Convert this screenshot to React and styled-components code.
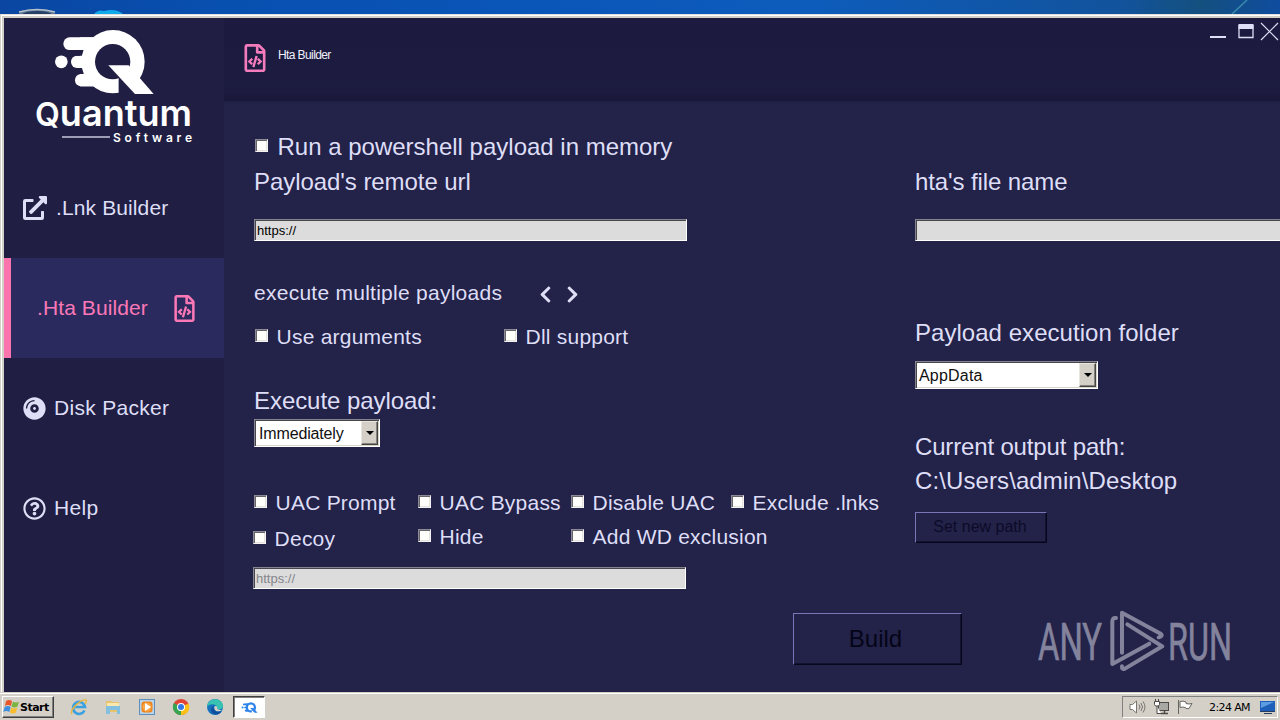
import React from "react";
import styled, { createGlobalStyle } from "styled-components";
import {
  FaRegFileCode,
  FaExternalLinkAlt,
  FaCompactDisc,
  FaRegQuestionCircle,
  FaChevronLeft,
  FaChevronRight,
} from "react-icons/fa";

const GlobalStyle = createGlobalStyle`
  * { box-sizing: border-box; }
  body { margin: 0; overflow: hidden; font-family: "Liberation Sans", Arial, sans-serif; }
  svg { display: block; flex: none; }
`;

const Desktop = styled.div`
  width: 1280px;
  height: 720px;
  overflow: hidden;
  display: flex;
  flex-direction: column;
`;

const Wallpaper = styled.div`
  height: 14px;
  flex: none;
  background: linear-gradient(90deg, #0a46a2 0, #0850b0 230px, #0a55b8 520px, #0d5cbc 800px, #12539c 1120px, #14507f 1200px, #0f4c9e 1280px);
`;

const WindowFrame = styled.div`
  height: 678px;
  flex: none;
  display: flex;
  padding: 2px 0 0 2px;
  background: #d4d0c8;
  border-top: 1px solid #e4e1da;
  border-left: 1px solid #d4d0c8;
  box-shadow: inset 1px 1px 0 #fff;
`;

const Window = styled.div`
  flex: 1;
  min-width: 0;
  display: flex;
  margin: 1px 0 0 1px;
  background: #232249;
  overflow: hidden;
  color: #dedef6;
`;

const Sidebar = styled.nav`
  width: 220px;
  flex: none;
  background: #201f43;
`;

const LogoArea = styled.div`
  height: 140px;
`;

const NavItem = styled.div`
  height: 100px;
  display: flex;
  align-items: center;
  padding-left: ${(p) => (p.$active ? 26 : 19)}px;
  gap: ${(p) => p.$gap || 8}px;
  font-size: 21px;
  line-height: 24px;
  letter-spacing: ${(p) => (p.$spacing === undefined ? 0.3 : p.$spacing)}px;
  background: ${(p) => (p.$active ? "#2b2a5e" : "transparent")};
  color: ${(p) => (p.$active ? "#fb78b6" : "#dedef6")};
  border-left: ${(p) => (p.$active ? "7px solid #fb74ad" : "0")};
`;

const Main = styled.main`
  flex: 1;
  min-width: 0;
`;

const TitleBar = styled.header`
  height: 84px;
  display: flex;
  padding: 4px 1px 0 21px;
  background: linear-gradient(#1c1b3f 0, #1c1b40 74px, #19183a 82px, #201f44 84px);
`;

const TitleIcon = styled.div`
  margin-top: 22px;
  width: 20px;
  color: #f57cbc;
  display: flex;
  justify-content: center;
`;

const Title = styled.div`
  margin: 26px 0 0 13px;
  flex: 1;
  font-size: 12px;
  line-height: 14px;
  letter-spacing: -0.6px;
  color: #f0f0fa;
`;

const Body = styled.div`
  display: grid;
  grid-template-columns: 662px 1fr;
  padding-left: 29px;
  height: 487px;
`;

const Column = styled.section`
  display: flex;
  flex-direction: column;
  align-items: flex-start;
  padding-top: ${(p) => p.$top}px;
`;

const Line = styled.div`
  display: flex;
  flex: none;
  margin-top: ${(p) => p.$mt || 0}px;
  margin-left: ${(p) => p.$ml || 0}px;
  height: ${(p) => (p.$small ? 24 : 28)}px;
  font-size: ${(p) => (p.$small ? 21 : 24)}px;
  line-height: ${(p) => (p.$small ? 24 : 28)}px;
  letter-spacing: ${(p) => (p.$spacing === undefined ? (p.$small ? 0.22 : 0) : p.$spacing)}px;
  white-space: nowrap;
`;

const OptionGrid = styled(Line)`
  display: grid;
  grid-template-columns: ${(p) => p.$cols};
`;

const Arrows = styled.div`
  display: flex;
  gap: 8px;
  margin: 4px 0 0 34px;
`;

const Option = styled.label`
  display: flex;
  gap: ${(p) => (p.$large ? 9.5 : 8.6)}px;
  margin-top: ${(p) => p.$drop || 0}px;
  margin-left: ${(p) => (p.$drop ? -1 : 0)}px;
`;

const Box = styled.span`
  width: 13px;
  height: 13px;
  flex: none;
  margin-top: ${(p) => (p.$large ? 6 : 4)}px;
  background: #fffffb;
  border: 1px solid;
  border-color: #8c8a94 #f4f2f4 #f4f2f4 #8c8a94;
  box-shadow: inset 1px 1px 0 #66646a, inset -1px -1px 0 #e6e3de;
`;

const Field = styled.div`
  width: ${(p) => p.$w || 433}px;
  height: 22px;
  flex: none;
  margin-top: ${(p) => p.$mt}px;
  margin-left: ${(p) => p.$ml || 0}px;
  padding: 1px 2px;
  font-size: 13px;
  line-height: 20px;
  background: #dcdcdc;
  color: ${(p) => (p.$muted ? "#85858b" : "#000")};
  border: 1px solid;
  border-color: #85838c #fff #fff #85838c;
  box-shadow: inset 1px 1px 0 #47464f;
`;

const SelectBox = styled.div`
  width: ${(p) => p.$w}px;
  height: 28px;
  flex: none;
  display: flex;
  justify-content: space-between;
  margin-top: ${(p) => p.$mt}px;
  margin-left: ${(p) => p.$ml || 0}px;
  padding: 1px 0 1px ${(p) => p.$pad || 3}px;
  background: #fff;
  color: #111;
  border: 1px solid;
  border-color: #85838c #fff #fff #85838c;
  box-shadow: inset 1px 1px 0 #47464f, inset -1px -1px 0 #d8d5cf;
  font-size: 16px;
  line-height: 25px;
  letter-spacing: ${(p) => p.$spacing || 0}px;
`;

const DropButton = styled.span`
  width: 17px;
  height: 24px;
  margin-right: 1px;
  display: flex;
  align-items: center;
  justify-content: center;
  background: #d4d0c8;
  border: 1px solid;
  border-color: #e8e5df #45443f #45443f #e8e5df;
  box-shadow: inset -1px -1px 0 #84827c;
`;

const FlatButton = styled.button`
  font-family: inherit;
  width: ${(p) => p.$w}px;
  height: ${(p) => p.$h}px;
  flex: none;
  padding: ${(p) => p.$padding || 0};
  margin: ${(p) => p.$margin || 0};
  font-size: ${(p) => p.$size}px;
  line-height: 1.15;
  color: ${(p) => p.$ink};
  background: #232249;
  border: 1px solid;
  border-color: #7976b8 #07071c #07071c #7976b8;
  box-shadow: inset -1px -1px 0 #131230;
`;

const Footer = styled.footer`
  display: flex;
  padding: 18px 0 0 569px;
`;

const Watermark = styled.div`
  margin: 1px 0 0 72px;

  svg { overflow: visible; }
`;

const Taskbar = styled.div`
  height: 28px;
  flex: none;
  display: flex;
  align-items: flex-start;
  background: #d4d0c8;
  border-top: 1px solid #d4d0c8;
  box-shadow: inset 0 1px 0 #fff;
  padding: 3px 0 0 2px;
`;

const StartButton = styled.div`
  width: 52px;
  height: 22px;
  display: flex;
  align-items: center;
  font: bold 11px "DejaVu Sans", sans-serif;
  letter-spacing: -0.5px;
  color: #000;
  border: 1px solid;
  border-color: #fff #404040 #404040 #fff;
  box-shadow: inset -1px -1px 0 #808080;
`;

const QuickLaunch = styled.div`
  display: flex;
  gap: 16px;
  margin: 2px 0 0 16px;
`;

const ActiveTask = styled.div`
  width: 32px;
  height: 22px;
  margin-left: 9px;
  display: flex;
  align-items: center;
  justify-content: center;
  background: #fff;
  border: 1px solid;
  border-color: #404040 #fff #fff #404040;
  box-shadow: inset 1px 1px 0 #808080;
`;

const Tray = styled.div`
  width: 156px;
  height: 22px;
  margin: 0 2px 0 auto;
  display: flex;
  align-items: center;
  padding-left: 6px;
  border: 1px solid;
  border-color: #808080 #fff #fff #808080;
  gap: 7px;
`;

const Clock = styled.span`
  font: 11px "DejaVu Sans", sans-serif;
  letter-spacing: -0.6px;
  color: #000;
  white-space: nowrap;
  margin: 0 2px 0 8px;
`;

function Check({ children, large, drop }) {
  return (
    <Option $large={large} $drop={drop}>
      <Box $large={large} />
      {children}
    </Option>
  );
}

function Select({ children, ...rest }) {
  return (
    <SelectBox {...rest}>
      {children}
      <DropButton>
        <svg width="8" height="4" viewBox="0 0 8 4"><path d="M0 0h8L4 4z" fill="#000" /></svg>
      </DropButton>
    </SelectBox>
  );
}

function QuantumMark({ fill, ground }) {
  return (
    <g>
      <g fill={fill}>
        <circle cx="184" cy="185.500" r="19" />
        <rect x="190" y="112" width="110" height="38" rx="19" />
        <rect x="213" y="167" width="90" height="37" rx="18" />
        <rect x="225" y="222" width="80" height="37" rx="18" />
        <path d="M240 112h50v147h-50z" />
      </g>
      <rect x="200" y="150" width="58" height="17" rx="8" fill={ground} />
      <rect x="215" y="204" width="50" height="18" rx="8" fill={ground} />
      <circle cx="339" cy="185" r="95" fill={fill} />
      <circle cx="338" cy="185" r="53" fill={ground} />
      <path d="M356 228L410 283H356z" fill={ground} />
      <path d="M325 196H386L461 282H405z" fill={fill} />
    </g>
  );
}

function Logo() {
  return (
    <svg width="220" height="140" viewBox="4 18 220 140">
      <g transform="scale(.3333)"><QuantumMark fill="#fff" ground="#201f43" /></g>
      <text x="35" y="126" fill="#fff" fontFamily="Inter" fontWeight="600" textLength="157" lengthAdjust="spacingAndGlyphs">
        <tspan fontSize="33">Q</tspan><tspan fontSize="37">uantum</tspan>
      </text>
      <path d="M62 137h48" stroke="#c8c8dc" strokeWidth="1.500" />
      <text x="113" y="142" fill="#fff" fontFamily="Inter" fontWeight="600" fontSize="12" textLength="79">Software</text>
    </svg>
  );
}

function AnyRun() {
  return (
    <svg width="200" height="66" viewBox="1034 608 200 66" opacity=".53">
      <g fill="#dadae6" stroke="#dadae6" strokeWidth=".6" fontFamily="Roboto" fontSize="52">
        <text x="1038" y="659.500" textLength="64" lengthAdjust="spacingAndGlyphs">ANY</text>
        <text x="1168" y="659.500" textLength="64" lengthAdjust="spacingAndGlyphs">RUN</text>
      </g>
      <g transform="translate(1020 590) scale(.3333)" fill="none" stroke="#dadae6" strokeWidth="12" strokeLinejoin="round" strokeLinecap="round">
        <path d="M288 84Q277 82 277 95V222L388 161" />
        <path d="M306 188V68L422 131Q430 138 416 142" />
        <path d="M322 103L427 169L315 236Q305 240 306 229" />
      </g>
    </svg>
  );
}

export default function App() {
  return (
    <Desktop>
      <GlobalStyle />
      <Wallpaper>
        <svg width="1280" height="14">
          <ellipse cx="37" cy="13" rx="18" ry="4" fill="#5e7795" />
          <ellipse cx="37" cy="14" rx="14" ry="3" fill="#263f66" />
          <path d="M19 12q18-5 36 0" fill="none" stroke="#b4c2cf" strokeWidth="1.500" />
          <path d="M94 14q4-5 10-3q12-3 19 3z" fill="#10a9ea" />
          <path d="M1232 14l15-14" stroke="#3a8bab" strokeWidth="1.500" />
        </svg>
      </Wallpaper>
      <WindowFrame>
        <Window>
          <Sidebar>
            <LogoArea><Logo /></LogoArea>
            <NavItem $gap={9} $spacing={0.12}><FaExternalLinkAlt size={24} />.Lnk Builder</NavItem>
            <NavItem $active $gap={23} $spacing={0.1}>.Hta Builder<FaRegFileCode size={27} /></NavItem>
            <NavItem><FaCompactDisc size={23} />Disk Packer</NavItem>
            <NavItem><FaRegQuestionCircle size={23} />Help</NavItem>
          </Sidebar>
          <Main>
            <TitleBar>
              <TitleIcon><FaRegFileCode size={28} /></TitleIcon>
              <Title>Hta Builder</Title>
              <svg width="70" height="20" viewBox="1209 22 70 20" stroke="#dedef6" fill="none">
                <path d="M1210 37h16" strokeWidth="2" />
                <path d="M1239 25v12.500h14V25" strokeWidth="1.300" />
                <path d="M1238.500 26.500h15" strokeWidth="5" />
                <path d="M1261 23l17 17M1278 23l-17 17" strokeWidth="1.200" />
              </svg>
            </TitleBar>
            <Body>
              <Column $top={31}>
                <Line $ml={2}><Check large>Run a powershell payload in memory</Check></Line>
                <Line $mt={7} $ml={1} $spacing={-0.06}>Payload's remote url</Line>
                <Field $mt={23} $ml={1}>https://</Field>
                <Line $small $mt={40} $ml={1} $spacing={0.26}>
                  execute multiple payloads
                  <Arrows><FaChevronLeft size={19} /><FaChevronRight size={19} /></Arrows>
                </Line>
                <OptionGrid $small $mt={20} $ml={2} $cols="249px auto">
                  <Check>Use arguments</Check>
                  <Check>Dll support</Check>
                </OptionGrid>
                <Line $mt={38} $ml={1} $spacing={-0.06}>Execute payload:</Line>
                <Select $w={126} $mt={4} $ml={1} $spacing={-0.15} $pad={4}>Immediately</Select>
                <OptionGrid $small $mt={44} $ml={1} $cols="164px 153px 160px auto">
                  <Check>UAC Prompt</Check>
                  <Check>UAC Bypass</Check>
                  <Check>Disable UAC</Check>
                  <Check>Exclude .lnks</Check>
                </OptionGrid>
                <OptionGrid $small $mt={10} $ml={1} $cols="164px 153px auto">
                  <Check drop={2}>Decoy</Check>
                  <Check>Hide</Check>
                  <Check>Add WD exclusion</Check>
                </OptionGrid>
                <Field $mt={18} $muted>https://</Field>
              </Column>
              <Column $top={66}>
                <Line $spacing={-0.1}>hta's file name</Line>
                <Field $w={400} $mt={23} />
                <Line $mt={78} $spacing={0.04}>Payload execution folder</Line>
                <Select $w={183} $mt={14} $spacing={0.2}>AppData</Select>
                <Line $mt={44} $spacing={-0.16}>Current output path:</Line>
                <Line $mt={6} $spacing={0.1}>C:\Users\admin\Desktop</Line>
                <FlatButton $w={132} $h={31} $size={16} $ink="#0c0b28" $padding="0 2px 0 0" $margin="17px 0 0">Set new path</FlatButton>
              </Column>
            </Body>
            <Footer>
              <FlatButton $w={169} $h={52} $size={24} $ink="#050518" $padding="0 4px 0 0" $margin="6px 0 0">Build</FlatButton>
              <Watermark><AnyRun /></Watermark>
            </Footer>
          </Main>
        </Window>
      </WindowFrame>
      <Taskbar>
        <StartButton>
          <svg width="17" height="16" viewBox="0 0 17 16">
            <path d="M3 2q3-2 6 0L8 7q-3-2-6 0z" fill="#e8572b" />
            <path d="M10 2.500q3 2 6 0l-1.500 5q-3 2-6 0z" fill="#7cb342" />
            <path d="M1.700 8q3-2 6 0l-1.400 5q-3-2-6 0z" fill="#3f8fe0" />
            <path d="M8.400 8.500q3 2 6 0l-1.500 5q-3 2-6 0z" fill="#f8bd2c" />
          </svg>
          Start
        </StartButton>
        <QuickLaunch>
          <svg width="18" height="18" viewBox="0 0 18 18">
            <path d="M14.500 12.500A6 6 0 1 1 15 9H4" fill="none" stroke="#3aa0e0" strokeWidth="2.600" />
            <path d="M2 16C-1 12 11 1 16 2q1 1-1 4" fill="none" stroke="#e9b63b" strokeWidth="1.400" />
          </svg>
          <svg width="18" height="18" viewBox="0 0 18 18">
            <path d="M2 3h5l1 1h7v10H2z" fill="#e5c46b" />
            <path d="M3 5h12v3H3z" fill="#f8e8ae" />
            <path d="M2 8h14v8h-3v-4H6v4H2z" fill="#83bfdf" />
          </svg>
          <svg width="18" height="18" viewBox="0 0 18 18">
            <rect x="1.500" y="1.500" width="15" height="15" fill="#b8d3ea" stroke="#5d8fbd" />
            <rect x="3.500" y="3.500" width="11" height="11" rx="3" fill="#f08316" />
            <circle cx="9" cy="9" r="4.500" fill="#f7a64a" />
            <path d="M7 5l6 4-6 4z" fill="#fff" />
          </svg>
          <svg width="18" height="18" viewBox="0 0 18 18">
            <circle cx="9" cy="9" r="8" fill="#e24334" />
            <path d="M9 9L2 5A8 8 0 0 0 9 17l4-6z" fill="#35a552" />
            <path d="M9 9l7.500-3.500A8 8 0 0 1 9 17z" fill="#fbc117" />
            <circle cx="9" cy="9" r="4" fill="#fff" />
            <circle cx="9" cy="9" r="3" fill="#3478e5" />
          </svg>
          <svg width="18" height="18" viewBox="0 0 18 18">
            <circle cx="9" cy="9" r="8" fill="#1672bd" />
            <path d="M1 9C2-1 16-1 17 8c0 4-5 4-6 2 1-3-6-6-10-1z" fill="#37c2b1" />
            <path d="M8 8c-2 4 3 7 8 5-2 3-5 4-8 3-4-2-4-6 0-8z" fill="#104f9c" />
            <path d="M9 8q-2 2 1 5 4 1 6-1-4 0-5-2 1-2-2-2z" fill="#d4d0c8" />
          </svg>
        </QuickLaunch>
        <ActiveTask>
          <svg width="17" height="11" viewBox="160 84 305 204"><QuantumMark fill="#2e83ea" ground="#fff" /></svg>
        </ActiveTask>
        <Tray>
          <svg width="17" height="16" viewBox="0 0 17 16" fill="none" stroke="#77756f">
            <path d="M1 5.500h2.500L7.500 2v12L3.500 10.500H1z" fill="#fff" />
            <path d="M10 5.500q2 2.500 0 5M12 4q3 4 0 8M14 2.500q4 5.500 0 11" />
          </svg>
          <svg width="17" height="16" viewBox="0 0 17 16" fill="none" stroke="#4c4b48">
            <rect x="5.500" y="3.500" width="10" height="8" fill="#a8a8a4" />
            <path d="M8 14.500h7M11.500 12v2" strokeWidth="1.500" />
            <path d="M1.500 2.500h5v3l-1 1.500h-3L1.500 5.500zM2.500 0v2M5.500 0v2M4 7v7.500h4" fill="#fff" />
          </svg>
          <svg width="17" height="16" viewBox="0 0 17 16" fill="#fff" stroke="#66645f">
            <path d="M1.500 1v14M3 2.500q3-1 6 .500v1.500q3 1 6 0l-3 5q-2 1-4-1-2-1-5 0z" />
          </svg>
          <Clock>2:24 AM</Clock>
          <svg width="17" height="16" viewBox="0 0 17 16">
            <path d="M1 2h15v10H1z" fill="#1d5fb9" />
            <path d="M2 3h13L2 9z" fill="#5c9de2" />
            <path d="M1 12h15v1H1zM5 14h8v1H5z" fill="#293c5c" />
          </svg>
        </Tray>
      </Taskbar>
    </Desktop>
  );
}
